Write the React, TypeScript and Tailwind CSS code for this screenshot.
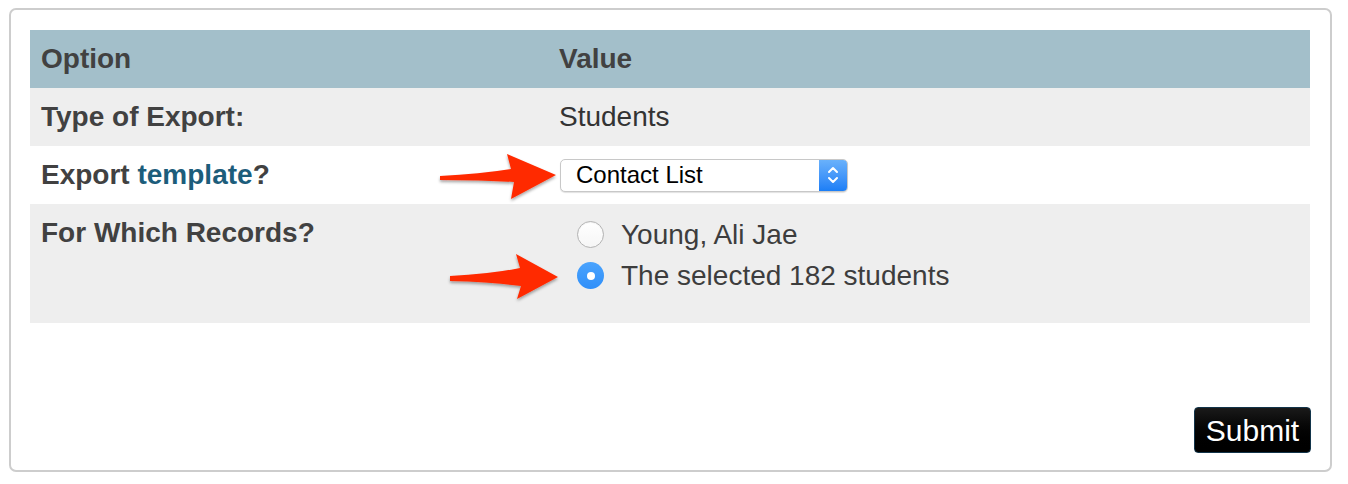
import React from 'react';

const font = { fontFamily: '"Liberation Sans", Arial, Helvetica, sans-serif' };

const Radio: React.FC<{ checked?: boolean; label: string }> = ({ checked, label }) => (
  <div className="flex h-[41px] items-center">
    {checked ? (
      <span className="ml-[28px] flex h-[27px] w-[27px] items-center justify-center rounded-full bg-gradient-to-b from-[#4aa3fd] to-[#2f8ff9]">
        <span className="h-[8px] w-[8px] rounded-full bg-white" />
      </span>
    ) : (
      <span className="ml-[28px] h-[27px] w-[27px] rounded-full border border-[#b3b3b3] bg-gradient-to-b from-white to-[#f6f6f6] shadow-[inset_0_1px_1px_rgba(0,0,0,0.05)]" />
    )}
    <span className="ml-[17px] text-[28px] text-[#3d3d3d]">{label}</span>
  </div>
);

const Arrows = () => (
  <svg className="pointer-events-none absolute left-0 top-0" width="1348" height="484">
    <defs>
      <filter id="sh" x="-20%" y="-20%" width="140%" height="160%">
        <feDropShadow dx="0" dy="2" stdDeviation="1.5" floodColor="#000" floodOpacity="0.35" />
      </filter>
    </defs>
    <path
      d="M440,176 Q480,174 511,169 L507,154 L556,175 L511,199 L514,182 Q480,180 440,180 Z"
      fill="#ff2a00"
      filter="url(#sh)"
    />
    <path
      d="M450,276 Q490,274 520,268 L516,254 L558,277 L517,299 L521,286 Q490,282 450,281 Z"
      fill="#ff2a00"
      filter="url(#sh)"
    />
  </svg>
);

export default function App() {
  return (
    <div className="relative h-[484px] w-[1348px] bg-white pl-[9px] pt-[8px]" style={font}>
      <div className="flex h-[464px] w-[1323px] flex-col rounded-[7px] border-2 border-[#cdcdcd] px-[19px] pb-[17px] pt-[20px]">
        {/* options table */}
        <div className="w-[1280px] text-[28px] text-[#414141]">
          <div className="flex h-[58px] items-center bg-[#a3bfca] font-bold">
            <div className="w-[519px] pl-[11px]">Option</div>
            <div className="pl-[10px]">Value</div>
          </div>
          <div className="flex h-[58px] items-center bg-[#eeeeee]">
            <div className="w-[519px] pl-[11px] font-bold">Type of Export:</div>
            <div className="pl-[10px] text-[#333]">Students</div>
          </div>
          <div className="flex h-[58px] items-center bg-white">
            <div className="w-[519px] pl-[11px] font-bold">
              Export <span className="text-[#1c5d7b]">template</span>?
            </div>
            <div className="pl-[11px]">
              <div className="flex h-[33px] w-[288px] items-stretch overflow-hidden rounded-[5px] border border-[#c8c8c8] bg-white shadow-[0_1px_1px_rgba(0,0,0,0.12)]">
                <div className="flex flex-1 items-center pl-[15px] text-[24px] text-black">Contact List</div>
                <div className="flex w-[28px] items-center justify-center bg-gradient-to-b from-[#69b1fb] to-[#1b7ef6]">
                  <svg width="12" height="20" viewBox="0 0 12 20" fill="none" stroke="white" strokeWidth="2" strokeLinecap="round" strokeLinejoin="round">
                    <path d="M2 7 L6 3 L10 7" />
                    <path d="M2 13 L6 17 L10 13" />
                  </svg>
                </div>
              </div>
            </div>
          </div>
          <div className="flex h-[119px] items-start bg-[#eeeeee]">
            <div className="w-[519px] pl-[11px] pt-[13px] font-bold leading-[32px]">For Which Records?</div>
            <div className="pt-[10px]">
              <Radio label="Young, Ali Jae" />
              <Radio checked label="The selected 182 students" />
            </div>
          </div>
        </div>

        <div className="mt-auto flex justify-end">
          <button className="h-[46px] w-[117px] rounded-[4px] border border-[#12344a] bg-gradient-to-b from-[#1a1a1a] to-[#000] text-[30px] text-white">
            Submit
          </button>
        </div>
      </div>
      <Arrows />
    </div>
  );
}
